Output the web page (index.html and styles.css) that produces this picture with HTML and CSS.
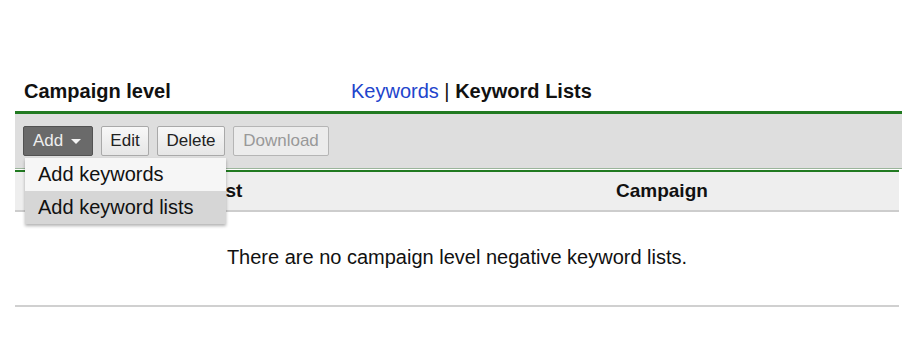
FILE: index.html
```html
<!DOCTYPE html>
<html>
<head>
<meta charset="utf-8" />
<title>Negative keywords</title>
<link rel="stylesheet" href="styles.css">
</head>

<body>
<div class="wrap">
  <div class="head">
    <h3 class="level">Campaign level</h3>
    <div class="tabs"><a href="javascript:;" class="tab">Keywords</a> | <b>Keyword Lists</b></div>
  </div>

  <div class="toolbar">
    <div class="menuWrap">
      <button type="button" class="btn btn-dark">Add <span class="caret"></span></button>
      <ul class="dropdown">
        <li>Add keywords</li>
        <li class="active">Add keyword lists</li>
      </ul>
    </div>
    <button type="button" class="btn btn-edit">Edit</button>
    <button type="button" class="btn btn-delete">Delete</button>
    <button type="button" class="btn btn-download" disabled>Download</button>
  </div>

  <div class="grid">
    <div class="thead">
      <div class="th th-name">Negative keyword list</div>
      <div class="th th-camp">Campaign</div>
    </div>
    <div class="empty">There are no campaign level negative keyword lists.</div>
  </div>
</div>
</body>
</html>
```

FILE: styles.css
```css
body {margin: 0; background: #fff; font-family: "Liberation Sans", Arial, sans-serif; color: #111;}
.wrap {margin-left: 15px; padding-top: 72px;}

.head {display: flex; align-items: center; height: 39px; border-bottom: 3px solid #217a21;}
.level {margin: 0; padding-left: 9px; width: 327px; font-size: 20px; font-weight: bold;}
.tabs {font-size: 20px; color: #111;}
.tabs .tab {color: #2244cc; text-decoration: none;}
.tabs b {font-weight: bold;}

.toolbar {display: flex; align-items: center; gap: 8px; height: 54px; padding-left: 8px; background: #dedede; border-bottom: 1px solid #9bb59b;}
.menuWrap {position: relative;}
.btn {height: 30px; margin: 0; padding: 0; border: 1px solid #a9a9a9; border-radius: 2px; background: linear-gradient(#f8f8f8, #e6e6e6); font-family: "Liberation Sans", Arial, sans-serif; font-size: 17px; color: #222;}
.btn-dark {width: 70px; border-color: #525252; background: #6a6a6a; color: #eee; text-align: left; padding-left: 9px;}
.btn-edit {width: 48px;}
.btn-delete {width: 68px;}
.btn-download {width: 96px; color: #999; background: #ececec; border-color: #b5b5b5;}
.caret {display: inline-block; margin-left: 3px; vertical-align: middle; border-left: 5px solid transparent; border-right: 5px solid transparent; border-top: 5px solid #f4f4f4;}

.dropdown {position: absolute; left: 2px; top: 32px; z-index: 2; width: 201px; margin: 0; padding: 0; list-style: none; background: #f6f6f6; box-shadow: 0 2px 3px rgba(0,0,0,.3); font-size: 20px;}
.dropdown li {height: 33px; line-height: 33px; padding-left: 13px; color: #111;}
.dropdown li.active {background: #d6d6d6;}

.grid {border-top: 1px solid #fff; margin-right: 3px;}
.thead {display: flex; align-items: center; height: 38px; background: #eee; border-top: 2px solid #217a21; border-bottom: 2px solid #cdcdcd; font-weight: bold; font-size: 19px;}
.th-name {width: 601px; padding-left: 33px; box-sizing: border-box; white-space: nowrap;}
.th-camp {padding-left: 0;}
.empty {height: 93px; line-height: 90px; text-align: center; font-size: 20px; border-bottom: 2px solid #d0d0d0;}
```
